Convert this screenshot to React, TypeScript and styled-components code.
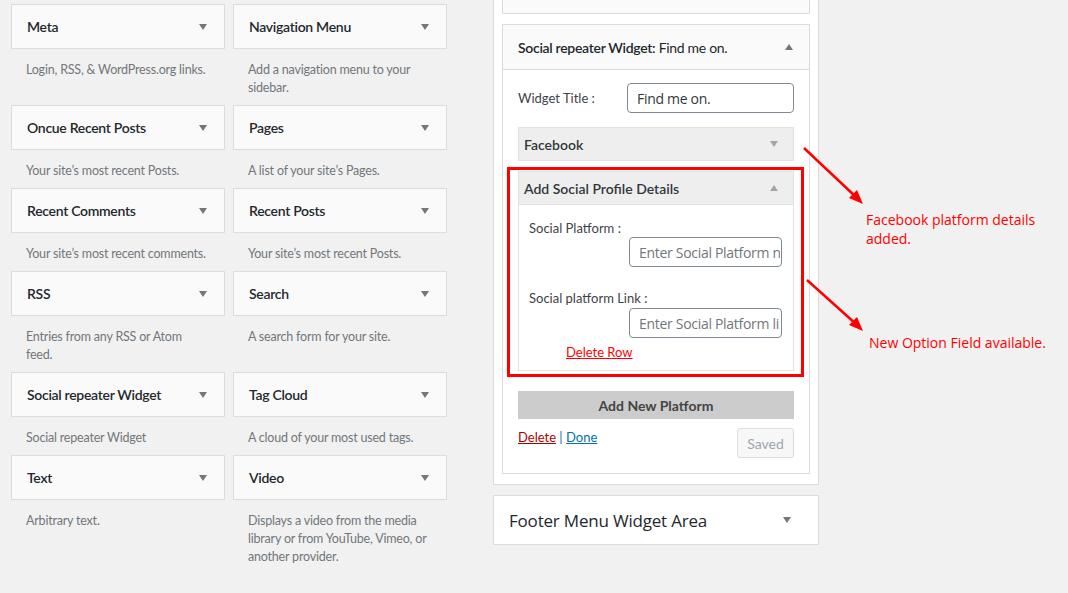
import React from "react";
import styled, { createGlobalStyle } from "styled-components";

const GlobalStyle = createGlobalStyle`
  html, body { margin: 0; padding: 0; background: #f1f1f1; }
  body {
    width: 1068px; height: 593px; overflow: hidden;
    font-family: Lato, "Open Sans", sans-serif;
    color: #23282d;
  }
  * { box-sizing: border-box; }
`;

const Page = styled.div`
  position: relative;
  display: flex;
  align-items: flex-start;
  gap: 46px;
  padding-left: 11px;
  width: 1068px;
  height: 593px;
`;

const WidgetGrid = styled.div`
  margin-top: 4px;
  display: grid;
  grid-template-columns: 214px 214px;
  column-gap: 8px;
  align-items: start;
`;

const Item = styled.div``;

const WidgetTop = styled.div`
  height: 45px;
  border: 1px solid #dcdcde;
  background: #fafafa;
  display: flex;
  align-items: center;
  justify-content: space-between;
  padding: 0 17px 0 15px;
`;

const WidgetName = styled.span`
  font-size: 14px;
  font-weight: 600;
  color: #23282d;
  letter-spacing: -0.3px;
`;

const Tri = styled.span<{ $up?: boolean; $color?: string }>`
  width: 0;
  height: 0;
  border-left: 4px solid transparent;
  border-right: 4px solid transparent;
  ${(p) =>
    p.$up
      ? `border-bottom: 6px solid ${p.$color || "#72777c"};`
      : `border-top: 6px solid ${p.$color || "#72777c"};`}
`;

const Desc = styled.div`
  padding: 12px 15px 8px;
  font-size: 12.5px;
  line-height: 18px;
  color: #72777c;
  letter-spacing: -0.2px;
`;

const RightCol = styled.div`
  width: 326px;
  display: flex;
  flex-direction: column;
  gap: 10px;
`;

const Sidebar = styled.div`
  background: #fff;
  border: 1px solid #dcdcde;
  border-top: none;
  padding: 0 8px 10px;
`;

const StubWidget = styled.div`
  height: 14px;
  border: 1px solid #dcdcde;
  border-top: none;
  background: #fafafa;
`;

const Widget = styled.div`
  position: relative;
  margin-top: 10px;
  border: 1px solid #dcdcde;
  background: #fff;
`;

const WidgetHead = styled.div`
  height: 45px;
  background: #fafafa;
  border-bottom: 1px solid #dcdcde;
  display: flex;
  align-items: center;
  justify-content: space-between;
  padding: 0 16px 0 15px;
  font-size: 14px;
  color: #23282d;
  letter-spacing: -0.3px;
`;

const Strong = styled.span`
  font-weight: 600;
`;

const WidgetBody = styled.div`
  padding: 13px 15px 15px;
`;

const TitleRow = styled.div`
  display: flex;
  align-items: center;
  justify-content: space-between;
`;

const Label = styled.label`
  display: block;
  font-size: 13px;
  line-height: 18px;
  color: #3c434a;
`;

const TextInput = styled.input<{ $w: number }>`
  display: block;
  width: ${(p) => p.$w}px;
  height: 30px;
  border: 1px solid #7e8993;
  border-radius: 4px;
  padding: 0 1px 0 9px;
  font-family: "Open Sans", "Noto Sans", sans-serif;
  font-size: 14px;
  color: #32373c;
  background: #fff;
  letter-spacing: -0.3px;
  &::placeholder { color: #72777c; }
`;

const BarHead = styled.div<{ $closed?: boolean }>`
  height: ${(p) => (p.$closed ? 34 : 33)}px;
  background: #eeeeee;
  ${(p) => (p.$closed ? "border: 1px solid #e2e2e2;" : "border-bottom: 1px solid #e2e2e2;")}
  display: flex;
  align-items: center;
  justify-content: space-between;
  padding: 0 15px 0 5px;
  font-size: 14px;
  font-weight: 600;
  color: #32373c;
`;

const FacebookBar = styled(BarHead)`
  margin-top: 14px;
`;

const Panel = styled.div`
  margin-top: 10px;
  border: 1px solid #e2e2e2;
  background: #fff;
`;

const PanelBody = styled.div`
  padding: 14px 11px 9px 10px;
`;

const Field = styled.div<{ $gap: number }>`
  margin-top: ${(p) => p.$gap}px;
  display: flex;
  flex-direction: column;
  align-items: stretch;
`;

const RightInput = styled(TextInput)<{ $top?: number }>`
  margin-left: auto;
  margin-top: ${(p) => p.$top || 0}px;
`;

const DeleteRow = styled.a`
  display: block;
  margin: 5px 0 0 37px;
  font-size: 13px;
  line-height: 18px;
  color: #ff0000;
  text-decoration: underline;
`;

const AddButton = styled.button`
  display: block;
  width: 100%;
  margin-top: 20px;
  height: 28px;
  border: none;
  background: #cccccc;
  font-family: inherit;
  font-size: 14px;
  font-weight: 700;
  color: #444;
`;

const Controls = styled.div`
  margin-top: 9px;
  display: flex;
  justify-content: space-between;
  align-items: flex-start;
`;

const Links = styled.div`
  font-size: 13px;
  line-height: 18px;
  color: #0073aa;
`;

const Link = styled.a<{ $danger?: boolean }>`
  color: ${(p) => (p.$danger ? "#a00" : "#0073aa")};
  text-decoration: underline;
`;

const SavedButton = styled.button`
  width: 57px;
  height: 30px;
  border: 1px solid #dddddd;
  border-radius: 3px;
  background: #f7f7f7;
  color: #a0a5aa;
  font-family: inherit;
  font-size: 14px;
  padding: 0;
`;

const FooterArea = styled.div`
  height: 50px;
  background: #fff;
  border: 1px solid #dcdcde;
  display: flex;
  align-items: center;
  justify-content: space-between;
  padding: 0 27px 0 15px;
`;

const FooterTitle = styled.h2`
  margin: 0;
  font-family: "Open Sans", "Noto Sans", sans-serif;
  font-size: 17px;
  font-weight: 400;
  color: #23282d;
  letter-spacing: -0.2px;
`;

const Highlight = styled.div`
  position: absolute;
  left: 507px;
  top: 167px;
  width: 297px;
  height: 210px;
  border: 3px solid #ff0000;
  pointer-events: none;
`;

const Overlay = styled.svg`
  position: absolute;
  left: 0;
  top: 0;
  pointer-events: none;
`;

const Note = styled.div<{ $x: number; $y: number }>`
  position: absolute;
  left: ${(p) => p.$x}px;
  top: ${(p) => p.$y}px;
  font-family: "Open Sans", "Noto Sans", sans-serif;
  font-size: 14px;
  line-height: 19px;
  color: #ff0000;
`;

const widgets: { name: string; desc: string }[] = [
  { name: "Meta", desc: "Login, RSS, & WordPress.org links." },
  { name: "Navigation Menu", desc: "Add a navigation menu to your sidebar." },
  { name: "Oncue Recent Posts", desc: "Your site\u2019s most recent Posts." },
  { name: "Pages", desc: "A list of your site\u2019s Pages." },
  { name: "Recent Comments", desc: "Your site\u2019s most recent comments." },
  { name: "Recent Posts", desc: "Your site\u2019s most recent Posts." },
  { name: "RSS", desc: "Entries from any RSS or Atom feed." },
  { name: "Search", desc: "A search form for your site." },
  { name: "Social repeater Widget", desc: "Social repeater Widget" },
  { name: "Tag Cloud", desc: "A cloud of your most used tags." },
  { name: "Text", desc: "Arbitrary text." },
  { name: "Video", desc: "Displays a video from the media library or from YouTube, Vimeo, or another provider." },
];

export default function App() {
  return (
    <>
      <GlobalStyle />
      <Page>
        <WidgetGrid>
          {widgets.map((w) => (
            <Item key={w.name}>
              <WidgetTop>
                <WidgetName>{w.name}</WidgetName>
                <Tri />
              </WidgetTop>
              <Desc>{w.desc}</Desc>
            </Item>
          ))}
        </WidgetGrid>

        <RightCol>
          <Sidebar>
            <StubWidget />
            <Widget>
              <WidgetHead>
                <span>
                  <Strong>Social repeater Widget:</Strong> Find me on.
                </span>
                <Tri $up />
              </WidgetHead>
              <WidgetBody>
                <TitleRow>
                  <Label>Widget Title :</Label>
                  <TextInput $w={167} defaultValue="Find me on." />
                </TitleRow>
                <FacebookBar $closed>
                  <span>Facebook</span>
                  <Tri $color="#a0a5aa" />
                </FacebookBar>
                <Panel>
                  <BarHead>
                    <span>Add Social Profile Details</span>
                    <Tri $up $color="#a0a5aa" />
                  </BarHead>
                  <PanelBody>
                    <Field $gap={0}>
                      <Label>Social Platform :</Label>
                      <RightInput $w={153} placeholder="Enter Social Platform name" />
                    </Field>
                    <Field $gap={22}>
                      <Label>Social platform Link :</Label>
                      <RightInput $w={153} $top={1} placeholder="Enter Social Platform link" />
                    </Field>
                    <DeleteRow href="#">Delete Row</DeleteRow>
                  </PanelBody>
                </Panel>
                <AddButton>Add New Platform</AddButton>
                <Controls>
                  <Links>
                    <Link $danger href="#">Delete</Link> | <Link href="#">Done</Link>
                  </Links>
                  <SavedButton disabled>Saved</SavedButton>
                </Controls>
              </WidgetBody>
            </Widget>
          </Sidebar>
          <FooterArea>
            <FooterTitle>Footer Menu Widget Area</FooterTitle>
            <Tri />
          </FooterArea>
        </RightCol>

        <Highlight />
        <Overlay width="1068" height="593" viewBox="0 0 1068 593">
          <line x1="804" y1="148" x2="856" y2="197" stroke="#ff0000" strokeWidth="2.5" />
          <polygon points="863,204 849,198 857,190" fill="#ff0000" />
          <line x1="807" y1="280" x2="856" y2="324" stroke="#ff0000" strokeWidth="2.5" />
          <polygon points="863,331 849,325 857,317" fill="#ff0000" />
        </Overlay>
        <Note $x={866} $y={210}>
          Facebook platform details
          <br />
          added.
        </Note>
        <Note $x={869} $y={333}>New Option Field available.</Note>
      </Page>
    </>
  );
}
